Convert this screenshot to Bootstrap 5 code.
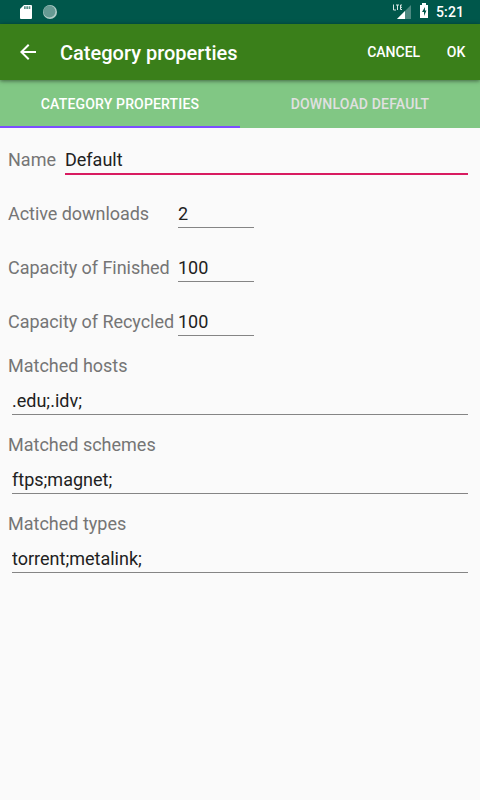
<!DOCTYPE html>
<html lang="en">
<head>
<meta charset="utf-8">
<meta name="viewport" content="width=device-width, initial-scale=1">
<title>Category properties</title>
<link href="https://cdn.jsdelivr.net/npm/bootstrap@5.3.0/dist/css/bootstrap.min.css" rel="stylesheet">
<style>
body{font-family:Roboto,sans-serif;font-size:18px;line-height:24px;background:#fafafa;color:#212121;min-height:800px;overflow:hidden}
.status-bar{height:24px;background:#00574b;color:#fff;font-size:14px;font-weight:500;padding:0 16px 0 20px}
.status-bar svg,.app-bar svg{display:block;flex:none}
.sync-dot{margin-left:11px}
.clock{width:28px;margin-left:8px;white-space:nowrap;letter-spacing:.15px}
.app-bar{height:56px;background:#3a7f1a;color:#fff;padding:0 14px 0 16px;box-shadow:0 1px 4px rgba(0,0,0,.5);z-index:2}
.app-title{font-size:20px;font-weight:500;margin:2px 0 0 20px}
.action{font-size:14px;font-weight:500;color:#fff;line-height:20px;margin-right:.7px}
.action-ok{margin-left:26px}
.tab-strip{height:48px;background:#81c784}
.tab-strip .nav-link{height:48px;font-size:14px;font-weight:500;line-height:20px;letter-spacing:.17px;padding:14px 0;color:#e0e0e0;border-radius:0}
.tab-strip .nav-link.active{color:#fff;border-bottom:2px solid #7c4dff}
.form-area{padding:5px 12px 0 8px}
.prop-row{height:54px}
.prop-row label,.match-label{color:#757575;white-space:nowrap}
.name-label{width:57px}
.num-label{width:170px;letter-spacing:-.05px}
.line-input,.line-input:focus{height:28px;padding:0 0 1px;border:0;border-radius:0;background:transparent;box-shadow:none;color:#212121;font-size:18px;line-height:24px;border-bottom:1px solid #858585}
.line-input.focused{height:29px;padding:1px 0 0;border-bottom:2px solid #d81b60}
.num-input{width:76px}
.match-group{height:79px;padding-top:5px}
.match-group .line-input{margin:9px 0 0 4px;width:456px}
</style>
</head>
<body>
<div class="status-bar d-flex align-items-center">
  <svg width="12" height="16" viewBox="0 0 12 16"><path fill="#fff" d="M4 1h7a1 1 0 0 1 1 1v12a1 1 0 0 1-1 1H1a1 1 0 0 1-1-1V5z"/><path fill="#00574b" opacity=".65" d="M4 2.300h1.700v2.700H4zM6.300 2.300H8v2.700H6.300zM8.600 2.300h1.700v2.700H8.600z"/></svg>
  <svg class="sync-dot" width="14" height="14" viewBox="0 0 14 14"><circle cx="7" cy="7" r="7" fill="#b1cdc9"/><circle cx="6.400" cy="6.400" r="6" fill="#669a93"/></svg>
  <div class="d-flex align-items-center ms-auto">
    <svg width="19" height="24" viewBox="0 0 19 24"><path fill="#4d8981" d="M18 5v14H4z"/><path fill="#fff" d="M12 11v8H4z"/><path fill="none" stroke="#d9e6e4" d="M.5 4.500V10H3M3 5h3M4.500 5v5M9 5H7.500v4.500H9M7.500 7.300H9"/></svg>
    <svg class="ms-2" width="8" height="24" viewBox="0 0 8 24"><path fill="#fff" d="M2 3h4v2h2v13H0V5h2z"/><path fill="#00574b" d="M5 7L2 12h2v4l2.500-5.500H5z"/></svg>
    <span class="clock">5:21</span>
  </div>
</div>
<header class="app-bar d-flex align-items-center position-relative">
  <svg width="24" height="24" viewBox="0 0 24 24"><path fill="#fff" d="M20 11H7.830l5.590-5.590L12 4l-8 8 8 8 1.410-1.410L7.830 13H20z"/></svg>
  <h1 class="app-title mb-0">Category properties</h1>
  <a class="action ms-auto text-decoration-none" href="#">CANCEL</a>
  <a class="action action-ok text-decoration-none" href="#">OK</a>
</header>
<nav class="tab-strip nav nav-fill flex-nowrap">
  <a class="nav-link w-50 active" href="#">CATEGORY PROPERTIES</a>
  <a class="nav-link w-50" href="#">DOWNLOAD DEFAULT</a>
</nav>
<form class="form-area">
  <div class="prop-row d-flex align-items-center"><label class="name-label" for="n">Name</label><input id="n" class="form-control line-input focused flex-fill w-auto" value="Default"></div>
  <div class="prop-row d-flex align-items-center"><label class="num-label" for="a">Active downloads</label><input id="a" class="form-control line-input num-input" value="2"></div>
  <div class="prop-row d-flex align-items-center"><label class="num-label" for="f">Capacity of Finished</label><input id="f" class="form-control line-input num-input" value="100"></div>
  <div class="prop-row d-flex align-items-center"><label class="num-label" for="r">Capacity of Recycled</label><input id="r" class="form-control line-input num-input" value="100"></div>
  <div class="match-group"><label class="match-label d-block" for="h">Matched hosts</label><input id="h" class="form-control line-input" value=".edu;.idv;"></div>
  <div class="match-group"><label class="match-label d-block" for="s">Matched schemes</label><input id="s" class="form-control line-input" value="ftps;magnet;"></div>
  <div class="match-group"><label class="match-label d-block" for="t">Matched types</label><input id="t" class="form-control line-input" value="torrent;metalink;"></div>
</form>
<script src="https://cdn.jsdelivr.net/npm/bootstrap@5.3.0/dist/js/bootstrap.bundle.min.js"></script>
</body>
</html>
